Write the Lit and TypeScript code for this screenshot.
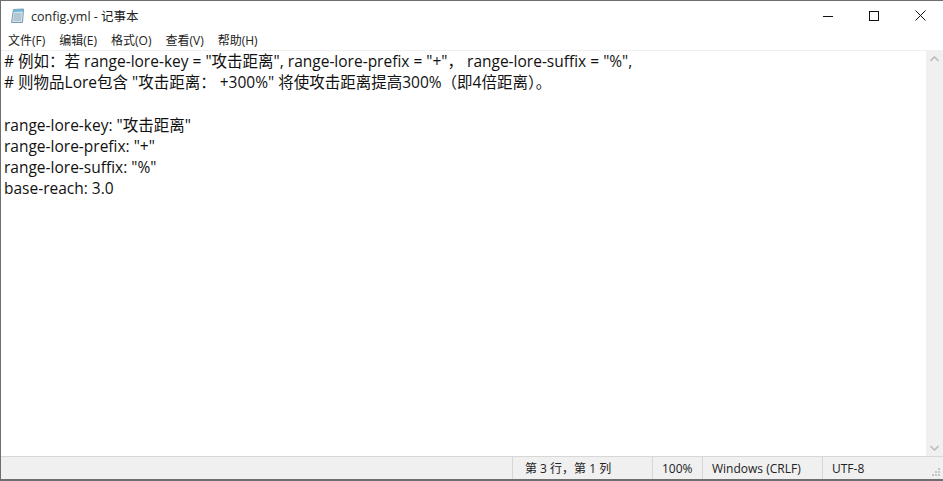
import { LitElement, html, css } from "lit";
import { customElement } from "lit/decorators.js";

const CJK = `"Noto Sans CJK SC"`;

@customElement("app-root")
export class AppRoot extends LitElement {
  static styles = css`
    :host {
      display: block;
      width: 943px;
      height: 481px;
      font-family: "Open Sans", ${css([CJK] as any)}, sans-serif;
      color: #111;
      background: #fff;
    }
    .win {
      box-sizing: border-box;
      width: 943px;
      height: 481px;
      border: 1px solid #6e6e6e;
      border-width: 1px 0 2px 1px;
      display: flex;
      flex-direction: column;
      overflow: hidden;
      background: #fff;
    }
    .title {
      height: 29px;
      display: flex;
      align-items: center;
      font-size: 12px;
      flex: none;
    }
    .doc { margin-left: 9px; width: 16px; height: 16px; flex: none; }
    .name { margin-left: 5px; font-size: 12.5px; color: #222; white-space: pre; }
    .spacer { flex: 1; }
    .btn { width: 46px; height: 29px; display: flex; align-items: center; justify-content: center; }
    .menu {
      height: 20px;
      display: flex;
      align-items: center;
      padding-left: 7px;
      gap: 14px;
      font-size: 12px;
      color: #222;
      flex: none;
    }
    .rule { height: 1px; background: #f0f0f0; flex: none; }
    .body { flex: 1; display: flex; min-height: 0; }
    .text {
      flex: 1;
      margin: 0;
      padding: 0 0 0 3px;
      font: inherit;
      font-size: 15.5px;
      line-height: 21.2px;
      white-space: pre;
      overflow: hidden;
      color: #111;
    }
    .sb {
      width: 17px;
      background: #f0f0f0;
      flex: none;
      display: flex;
      flex-direction: column;
      justify-content: space-between;
      align-items: center;
    }
    .sb svg { display: block; margin: 5px 0; }
    .status {
      height: 22px;
      flex: none;
      background: #f0f0f0;
      border-top: 1px solid #d7d7d7;
      display: flex;
      font-size: 12px;
      color: #222;
      align-items: stretch;
      position: relative;
    }
    .cell { display: flex; align-items: center; border-left: 1px solid #d7d7d7; padding-left: 9px; box-sizing: border-box; white-space: pre; }
    .grip { position: absolute; right: 2px; bottom: 2px; }
  `;

  render() {
    const lines = `# 例如：若 range-lore-key = "攻击距离", range-lore-prefix = "+"， range-lore-suffix = "%",
# 则物品Lore包含 "攻击距离： +300%" 将使攻击距离提高300%（即4倍距离）。

range-lore-key: "攻击距离"
range-lore-prefix: "+"
range-lore-suffix: "%"
base-reach: 3.0`;
    return html`<div class="win">
      <div class="title">
        <svg class="doc" viewBox="0 0 16 16">
          <path d="M3.5 1.5 L13.5 1 L12.5 14.5 L1.5 14.5 Z" fill="#cfe6f2" stroke="#7d97a8" stroke-width="1"/>
          <path d="M3.5 1.5 L13.5 1 L13.3 3.5 L3.2 4 Z" fill="#6fb6d8"/>
          <path d="M4 6h7.5M3.7 8h7.6M3.5 10h7.6M3.3 12h7.6" stroke="#8a9aa5" stroke-width=".8"/>
        </svg>
        <span class="name">config.yml - 记事本</span>
        <span class="spacer"></span>
        <div class="btn"><svg width="10" height="10" viewBox="0 0 10 10"><path d="M0 5.5h10" stroke="#111" stroke-width="1"/></svg></div>
        <div class="btn"><svg width="10" height="10" viewBox="0 0 10 10"><rect x=".5" y=".5" width="9" height="9" fill="none" stroke="#111"/></svg></div>
        <div class="btn"><svg width="11" height="11" viewBox="0 0 11 11"><path d="M.5.5l10 10M10.5.5l-10 10" stroke="#111" stroke-width="1"/></svg></div>
      </div>
      <div class="menu">
        <span>文件(F)</span><span>编辑(E)</span><span>格式(O)</span><span>查看(V)</span><span>帮助(H)</span>
      </div>
      <div class="rule"></div>
      <div class="body">
        <pre class="text">${lines}</pre>
        <div class="sb">
          <svg width="9" height="6" viewBox="0 0 9 6"><path d="M.5 5L4.5 1L8.5 5" fill="none" stroke="#bdbdbd" stroke-width="1.6"/></svg>
          <svg width="9" height="6" viewBox="0 0 9 6"><path d="M.5 1L4.5 5L8.5 1" fill="none" stroke="#bdbdbd" stroke-width="1.6"/></svg>
        </div>
      </div>
      <div class="status">
        <div style="width:511px"></div>
        <div class="cell" style="width:140px;padding-left:12px">第 3 行，第 1 列</div>
        <div class="cell" style="width:50px">100%</div>
        <div class="cell" style="width:120px">Windows (CRLF)</div>
        <div class="cell" style="flex:1">UTF-8</div>
        <svg class="grip" width="10" height="10" viewBox="0 0 10 10"><path d="M7 1h2v2H7zM4 4h2v2H4zM7 4h2v2H7zM1 7h2v2H1zM4 7h2v2H4zM7 7h2v2H7z" fill="#c4c4c4"/></svg>
      </div>
    </div>`;
  }
}
